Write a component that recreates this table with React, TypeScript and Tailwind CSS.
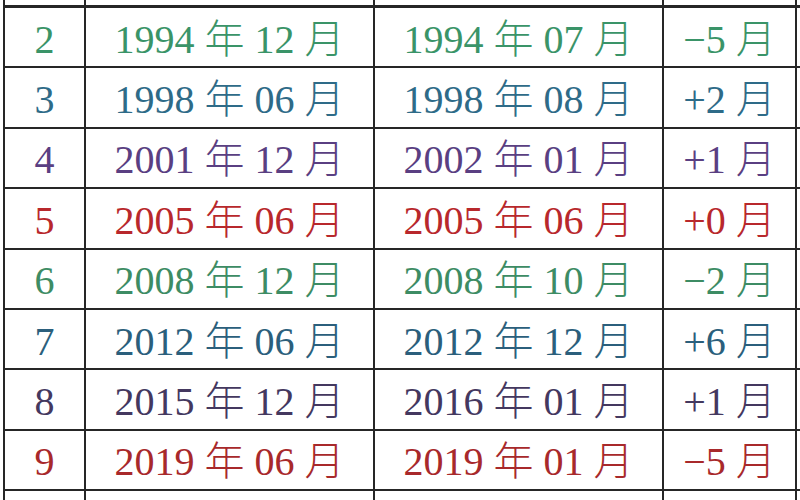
import React from "react";

// rows visible in the screenshot (row 1 and 10 are cut off by the frame)
const rows = [
  { n: "2", a: "1994 年 12 月", b: "1994 年 07 月", d: "−5 月", color: "text-[#3a9468]" },
  { n: "3", a: "1998 年 06 月", b: "1998 年 08 月", d: "+2 月", color: "text-[#2e6b88]" },
  { n: "4", a: "2001 年 12 月", b: "2002 年 01 月", d: "+1 月", color: "text-[#5a3f82]" },
  { n: "5", a: "2005 年 06 月", b: "2005 年 06 月", d: "+0 月", color: "text-[#b8282c]" },
  { n: "6", a: "2008 年 12 月", b: "2008 年 10 月", d: "−2 月", color: "text-[#3d8c64]" },
  { n: "7", a: "2012 年 06 月", b: "2012 年 12 月", d: "+6 月", color: "text-[#2b5f7c]" },
  { n: "8", a: "2015 年 12 月", b: "2016 年 01 月", d: "+1 月", color: "text-[#44385f]" },
  { n: "9", a: "2019 年 06 月", b: "2019 年 01 月", d: "−5 月", color: "text-[#a8292b]" },
];

const cell = "flex items-center justify-center border-r-2 border-[#262626] whitespace-pre pt-[5px]";

function Row({
  cells,
  className,
  color,
}: {
  cells: string[];
  className: string;
  color?: string;
}) {
  return (
    <div className={`flex ${className} ${color ?? ""}`}>
      <div className={`${cell} w-[83px] border-l-2`}>{cells[0]}</div>
      <div className={`${cell} w-[289px]`}>{cells[1]}</div>
      <div className={`${cell} w-[289px]`}>{cells[2]}</div>
      <div className={`${cell} w-[133px]`}>{cells[3]}</div>
    </div>
  );
}

export default function App() {
  return (
    <div
      className="w-[800px] h-[500px] overflow-hidden bg-white pl-[3px] text-[40px] leading-none font-light"
      style={{ fontFamily: '"Liberation Serif", "Noto Sans CJK SC", serif' }}
    >
      <Row cells={["", "", "", ""]} className="h-[8px] border-b-[3px] border-[#262626]" />
      {rows.map((r) => (
        <Row
          key={r.n}
          cells={[r.n, r.a, r.b, r.d]}
          color={r.color}
          className="h-[60.4px] border-b-2 border-[#262626]"
        />
      ))}
      <Row cells={["", "", "", ""]} className="h-[20px]" />
    </div>
  );
}
